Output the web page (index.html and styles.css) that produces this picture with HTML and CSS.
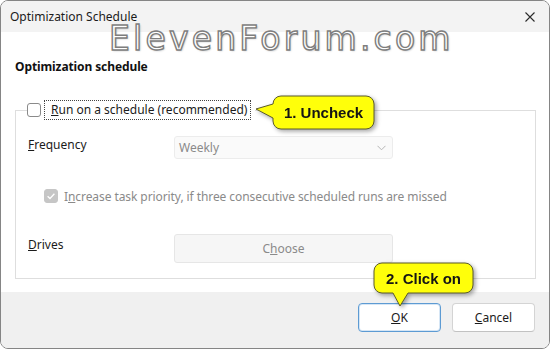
FILE: index.html
```html
<!DOCTYPE html>
<html>
<head>
<meta charset="utf-8">
<link rel="stylesheet" href="styles.css">
</head>
<body>
<div class="window">
  <div class="titlebar">
    <span class="title">Optimization Schedule</span>
    <svg class="close" width="12" height="12" viewBox="0 0 12 12"><path d="M1.5 1.5 L10.5 10.5 M10.5 1.5 L1.5 10.5" stroke="#2b2b2b" stroke-width="1.1" fill="none"/></svg>
  </div>
  <div class="content">
    <div class="heading">Optimization schedule</div>
    <fieldset class="group">
      <legend class="legend">
        <span class="checkbox"></span>
        <span class="focus"><u>R</u>un on a schedule (recommended)</span>
      </legend>
      <div class="grid">
        <span class="label"><u>F</u>requency</span>
        <div class="select">
          <span>Weekly</span>
          <svg width="9" height="6" viewBox="0 0 9 6"><path d="M0.5 0.8 L4.5 4.8 L8.5 0.8" stroke="#b5b5b5" stroke-width="1" fill="none"/></svg>
        </div>
        <div class="check-row">
          <span class="checkbox disabled"><svg width="14" height="14" viewBox="0 0 14 14"><path d="M3.6 7.2 L6 9.5 L10.4 4.8" stroke="#fff" stroke-width="1.3" fill="none"/></svg></span>
          <span class="muted">I<u>n</u>crease task priority, if three consecutive scheduled runs are missed</span>
        </div>
        <span class="label"><u>D</u>rives</span>
        <div class="choose">C<u>h</u>oose</div>
      </div>
    </fieldset>
  </div>
  <div class="footer">
    <button class="btn ok"><u>O</u>K</button>
    <button class="btn"><u>C</u>ancel</button>
  </div>

  <div class="watermark">ElevenForum.com</div>

  <div class="callout c1">
    <svg width="130" height="45" viewBox="0 0 130 45"><path d="M30 5 H115 A8 8 0 0 1 123 13 V30 A8 8 0 0 1 115 38 H30 A8 8 0 0 1 22 30 V27 L5 18 L22 13 A8 8 0 0 1 30 5 Z" fill="#ffff0a" stroke="#5b5b2a" stroke-width="1"/></svg>
    <span class="ctext">1. Uncheck</span>
  </div>
  <div class="callout c2">
    <svg width="110" height="52" viewBox="0 0 110 52"><path d="M13 4 H96 A8 8 0 0 1 104 12 V26 A8 8 0 0 1 96 34 H39 L31 47 L24 34 H13 A8 8 0 0 1 5 26 V12 A8 8 0 0 1 13 4 Z" fill="#ffff0a" stroke="#5b5b2a" stroke-width="1"/></svg>
    <span class="ctext">2. Click on</span>
  </div>
</div>
</body>
</html>
```

FILE: styles.css
```css
* { box-sizing: border-box; }
html, body { margin: 0; padding: 0; background: #fff; }
body {
  width: 550px;
  height: 349px;
  font-family: "Noto Sans", "Open Sans", sans-serif;
  font-size: 12px;
  color: #1b1b1b;
}
u { text-decoration: underline; text-underline-offset: 1px; }

.window {
  position: relative;
  width: 550px;
  height: 349px;
  border: 1px solid #858585;
  border-radius: 8px;
  overflow: hidden;
  display: flex;
  flex-direction: column;
  background: #fff;
}

.titlebar {
  height: 31px;
  flex: none;
  background: #f3f3f3;
  display: flex;
  align-items: center;
  justify-content: space-between;
  padding: 0 13px 0 9px;
}
.title { font-size: 12px; line-height: 14px; color: #1b1b1b; }
.close { display: block; margin-top: 1px; }

.content {
  flex: 1;
  padding: 27px 0 0 14px;
  background: #fff;
}
.heading {
  font-weight: 700;
  line-height: 16px;
  color: #111;
  letter-spacing: -0.1px;
}

.group {
  margin: 25px 13px 0 0;
  border: 1px solid #dedede;
  padding: 16px 12px 16px 12px;
  min-width: 0;
}
.legend {
  display: flex;
  align-items: center;
  height: 20px;
  padding: 0 4px 0 0;
  margin-left: -1px;
}
.checkbox {
  width: 14px;
  height: 14px;
  border: 1px solid #8a8a8a;
  border-radius: 3px;
  background: #fff;
  flex: none;
  display: block;
}
.checkbox.disabled {
  background: #c6c6c6;
  border-color: #c6c6c6;
}
.checkbox.disabled svg { display: block; margin: -1px; }
.focus {
  margin-left: 3px;
  height: 20px;
  line-height: 18px;
  border: 1px dotted #444;
  padding: 0 3px 0 6px;
  white-space: nowrap;
}

.grid {
  display: grid;
  grid-template-columns: 146px 219px;
  grid-template-rows: 23px 20px 29px;
  row-gap: 27px;
  align-items: center;
}
.label { line-height: 16px; margin-top: -6px; }
.select {
  height: 23px;
  background: #fafafa;
  border: 1px solid #ececec;
  border-radius: 3px;
  display: flex;
  align-items: center;
  justify-content: space-between;
  padding: 0 6px 0 4px;
  color: #8a8a8a;
}
.select svg { display: block; }
.check-row {
  grid-column: 1 / 3;
  display: flex;
  align-items: center;
  padding-left: 16px;
  gap: 6px;
  height: 20px;
  white-space: nowrap;
}
.muted { color: #8a8a8a; letter-spacing: -0.08px; }
.choose {
  height: 29px;
  background: #f6f6f6;
  border: 1px solid #e6e6e6;
  border-radius: 3px;
  display: flex;
  align-items: center;
  justify-content: center;
  color: #8a8a8a;
  margin-top: 2px;
}

.footer {
  height: 56px;
  flex: none;
  background: #f0f0f0;
  display: flex;
  justify-content: flex-end;
  align-items: flex-start;
  gap: 11px;
  padding: 11px 14px 0 0;
}
.btn {
  width: 83px;
  height: 29px;
  background: #fff;
  border: 1px solid #d4d4d4;
  border-bottom-color: #c2c2c2;
  border-radius: 4px;
  font-family: inherit;
  font-size: 12px;
  color: #1b1b1b;
  padding: 0;
}
.btn.ok {
  border: 1px solid #5d9bd3;
  box-shadow: inset 0 0 0 1px #d6e6f5;
}

.watermark {
  position: absolute;
  left: 108px;
  top: 25px;
  font-family: "DejaVu Sans", sans-serif;
  font-size: 33px;
  letter-spacing: 3.2px;
  line-height: 26px;
  color: #fff;
  -webkit-text-stroke: 1.4px #7e7e7e;
  text-shadow: 1px 1px 2px rgba(0,0,0,0.25);
  white-space: nowrap;
}

.callout {
  position: absolute;
  filter: drop-shadow(2px 2px 2px rgba(0,0,0,0.35));
}
.callout svg { display: block; }
.c1 { left: 250px; top: 90px; width: 130px; height: 45px; }
.c2 { left: 368px; top: 258px; width: 110px; height: 52px; }
.ctext {
  position: absolute;
  font-family: "Liberation Sans", Arial, sans-serif;
  font-weight: 700;
  font-size: 15px;
  color: #151515;
  display: flex;
  align-items: center;
  justify-content: center;
  white-space: nowrap;
}
.c1 .ctext { left: 22px; top: 5px; width: 101px; height: 33px; }
.c2 .ctext { left: 5px; top: 4px; width: 99px; height: 30px; }
```
